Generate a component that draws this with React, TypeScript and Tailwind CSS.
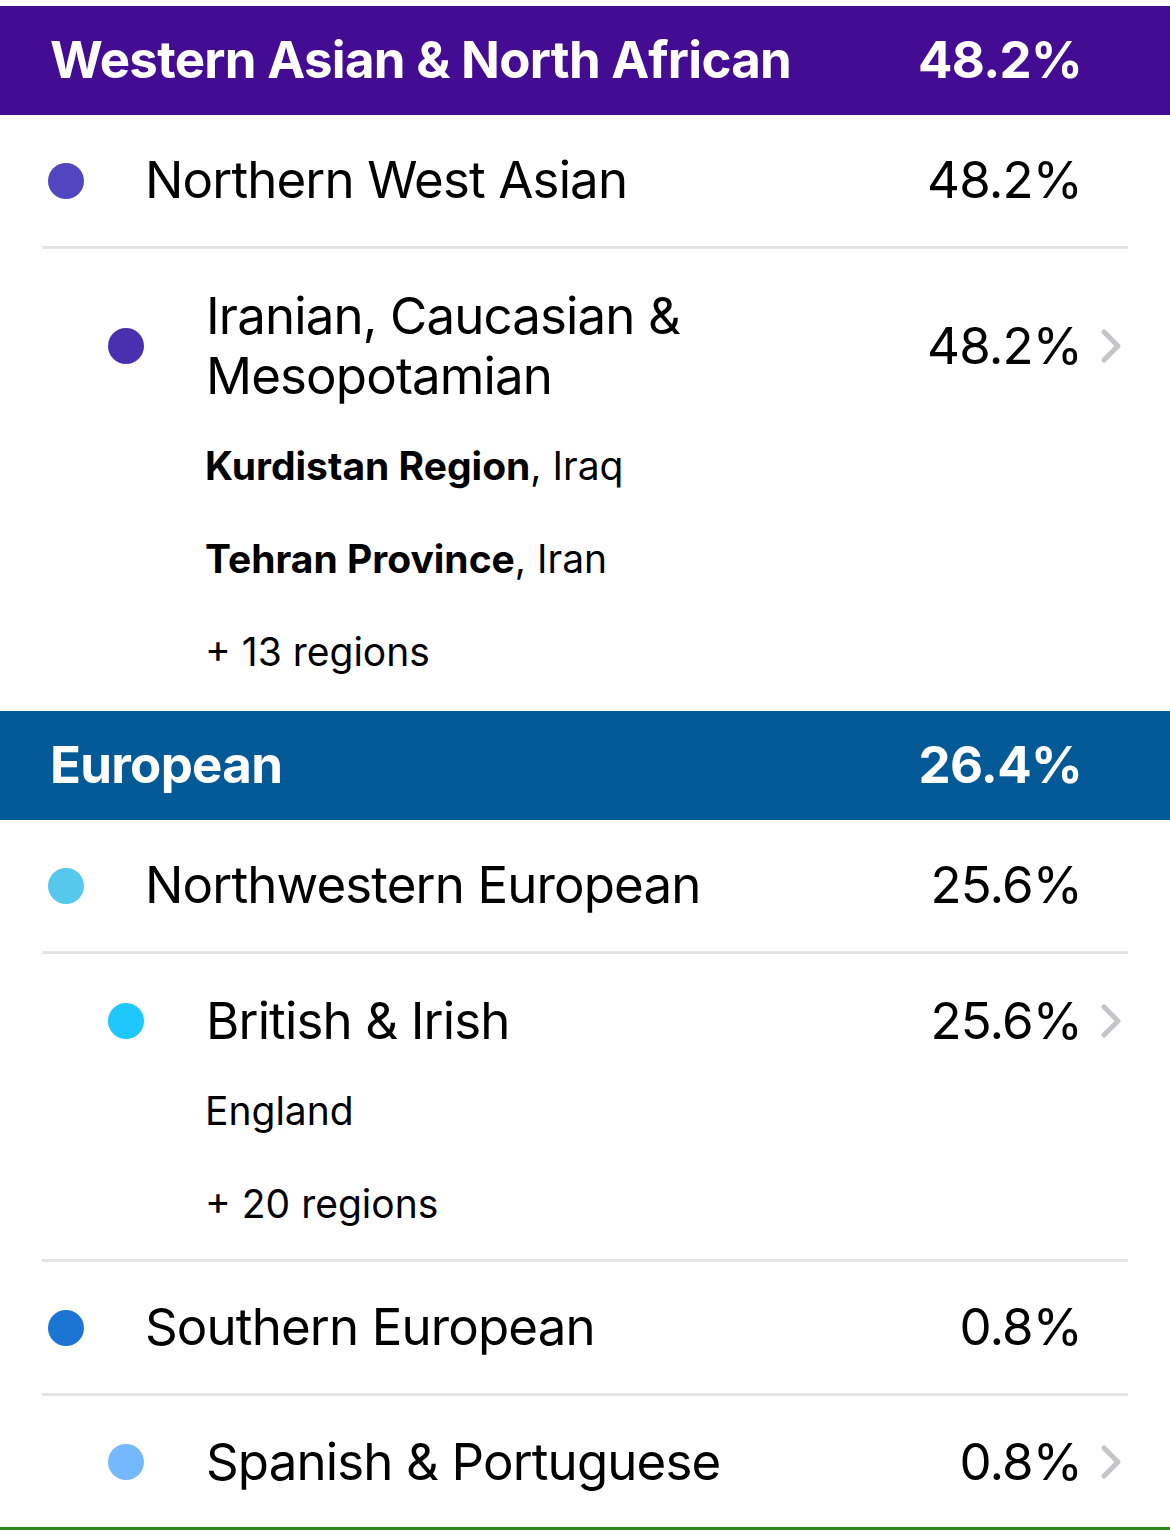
import React from "react"

type Sub = {
  name: string[]
  pct: string
  color: string
  pb: string
  regions: { bold?: string; rest: string }[]
}

type Row = {
  name: string
  pct: string
  color: string
  subs: Sub[]
}

type Group = {
  name: string
  pct: string
  bg: string
  rows: Row[]
}

const groups: Group[] = [
  {
    name: "Western Asian & North African",
    pct: "48.2%",
    bg: "bg-[#430c93]",
    rows: [
      {
        name: "Northern West Asian",
        pct: "48.2%",
        color: "bg-[#5245c0]",
        subs: [
          {
            name: ["Iranian, Caucasian &", "Mesopotamian"],
            pct: "48.2%",
            color: "bg-[#4a30ae]",
            pb: "pb-[12px]",
            regions: [
              { bold: "Kurdistan Region", rest: ", Iraq" },
              { bold: "Tehran Province", rest: ", Iran" },
              { rest: "+ 13 regions" },
            ],
          },
        ],
      },
    ],
  },
  {
    name: "European",
    pct: "26.4%",
    bg: "bg-[#035a97]",
    rows: [
      {
        name: "Northwestern European",
        pct: "25.6%",
        color: "bg-[#55c8ec]",
        subs: [
          {
            name: ["British & Irish"],
            pct: "25.6%",
            color: "bg-[#1fc8fc]",
            pb: "pb-[8px]",
            regions: [{ rest: "England" }, { rest: "+ 20 regions" }],
          },
        ],
      },
      {
        name: "Southern European",
        pct: "0.8%",
        color: "bg-[#1a76d2]",
        subs: [
          {
            name: ["Spanish & Portuguese"],
            pct: "0.8%",
            color: "bg-[#75b9fc]",
            pb: "",
            regions: [],
          },
        ],
      },
    ],
  },
]

function Chevron() {
  return (
    <svg width="22" height="36" viewBox="0 0 22 36" fill="none">
      <path d="M4 4 L18 18 L4 32" stroke="#c5c5c9" strokeWidth="5" strokeLinecap="round" strokeLinejoin="round" />
    </svg>
  )
}

function Divider() {
  return <div className="mx-[42px] h-[3px] bg-[#e5e5e5]" />
}

function SubRow({ sub }: { sub: Sub }) {
  const hasRegions = sub.regions.length > 0
  return (
    <div className={hasRegions ? `mx-[42px] pt-[37px] ${sub.pb}` : "mx-[42px] h-[131px] flex items-center"}>
      <div className="flex items-center w-full">
        <div className={`ml-[66px] w-9 h-9 rounded-full shrink-0 ${sub.color}`} />
        <div className="ml-[62px] flex-1 text-[51px] leading-[60px] tracking-[-0.017em] text-black">
          {sub.name.map((l) => (
            <div key={l}>{l}</div>
          ))}
        </div>
        <div className="text-[51px] leading-[60px] tracking-[-0.017em] text-black">{sub.pct}</div>
        <div className="w-[46px] flex justify-start pl-[18px]">
          <Chevron />
        </div>
      </div>
      {hasRegions && (
        <div className="mt-[14px] ml-[163px]">
          {sub.regions.map((r) => (
            <div key={r.rest + (r.bold ?? "")} className="h-[93px] flex items-center text-[39px] text-black">
              <span>
                {r.bold && <span className="font-bold">{r.bold}</span>}
                {r.rest}
              </span>
            </div>
          ))}
        </div>
      )}
    </div>
  )
}

export default function App() {
  return (
    <div className="w-[1170px] h-[1530px] overflow-hidden bg-white pt-[6px] font-['Inter',sans-serif]">
      {groups.map((g) => (
        <div key={g.name}>
          <div className={`h-[109px] ${g.bg} flex items-center justify-between pl-[50px] pr-[88px] text-white font-bold text-[51px] tracking-[-0.014em]`}>
            <span>{g.name}</span>
            <span>{g.pct}</span>
          </div>
          {g.rows.map((r, ri) => (
            <div key={r.name}>
              {ri > 0 && <Divider />}
              <div className="mx-[42px] h-[131px] flex items-center">
                <div className={`ml-[6px] w-9 h-9 rounded-full shrink-0 ${r.color}`} />
                <div className="ml-[61px] flex-1 text-[51px] tracking-[-0.017em] text-black">{r.name}</div>
                <div className="mr-[46px] text-[51px] tracking-[-0.017em] text-black">{r.pct}</div>
              </div>
              {r.subs.map((s, si) => (
                <div key={s.pct + si}>
                  <Divider />
                  <SubRow sub={s} />
                </div>
              ))}
            </div>
          ))}
        </div>
      ))}
      <div className="h-[3px] bg-[#2b8a15]" />
    </div>
  )
}
